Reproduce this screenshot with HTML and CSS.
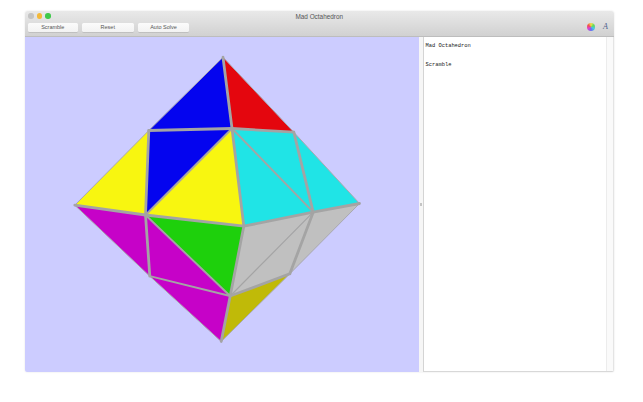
FILE: index.html
```html
<!DOCTYPE html>
<html lang="en">
<head>
<meta charset="utf-8">
<title>Mad Octahedron</title>
<link rel="stylesheet" href="styles.css">
</head>
<body>
<div class="window">
  <header class="chrome">
    <div class="titlebar">
      <div class="lights">
        <span class="light light-close"></span>
        <span class="light light-min"></span>
        <span class="light light-max"></span>
      </div>
      <div class="title">Mad Octahedron</div>
    </div>
    <div class="toolbar">
      <button class="btn btn-scramble">Scramble</button>
      <button class="btn btn-reset">Reset</button>
      <button class="btn btn-solve">Auto Solve</button>
      <div class="tools">
        <span class="wheel"></span>
        <span class="font-a">A</span>
      </div>
    </div>
  </header>
  <main class="content">
    <div class="canvas">
      <svg class="scene" viewBox="24.5 36.5 395 335.5" width="395" height="335.5" aria-label="Mad Octahedron puzzle">
        <g class="faces">
          <polygon class="blue" points="222.5,56.7 148.3,130 231.5,128"/>
          <polygon class="blue" points="148.3,130 145,214.5 231.5,128"/>
          <polygon class="red" points="222.5,56.7 231.5,128 293.3,131.7"/>
          <polygon class="yellow" points="74.3,204.7 145,214.5 148.3,130"/>
          <polygon class="yellow" points="145,214.5 243.3,225.7 231.5,128"/>
          <polygon class="cyan" points="231.5,128 312.7,211.7 243.3,225.7"/>
          <polygon class="cyan" points="231.5,128 293.3,131.7 312.7,211.7"/>
          <polygon class="cyan" points="293.3,131.7 359,203 312.7,211.7"/>
          <polygon class="magenta" points="74.3,204.7 149.3,275.7 145,214.5"/>
          <polygon class="magenta" points="145,214.5 229.7,295.5 149.3,275.7"/>
          <polygon class="magenta" points="149.3,275.7 229.7,295.5 220.7,341"/>
          <polygon class="green" points="145,214.5 243.3,225.7 229.7,295.5"/>
          <polygon class="gray" points="243.3,225.7 312.7,211.7 229.7,295.5"/>
          <polygon class="gray" points="312.7,211.7 289.3,273.3 229.7,295.5"/>
          <polygon class="gray" points="312.7,211.7 359,203 289.3,273.3"/>
          <polygon class="olive" points="229.7,295.5 289.3,273.3 220.7,341"/>
        </g>
        <g class="edges-outer">
          <polygon points="222.5,56.7 293.3,131.7 359,203 289.3,273.3 220.7,341 149.3,275.7 74.3,204.7 148.3,130"/>
        </g>
        <g class="edges-inner">
          <line x1="222.5" y1="56.7" x2="231.5" y2="128"/>
          <line x1="148.3" y1="130" x2="231.5" y2="128"/>
          <line x1="148.3" y1="130" x2="145" y2="214.5"/>
          <line x1="74.3" y1="204.7" x2="145" y2="214.5"/>
          <line x1="145" y1="214.5" x2="243.3" y2="225.7"/>
          <line x1="231.5" y1="128" x2="243.3" y2="225.7"/>
          <line x1="231.5" y1="128" x2="293.3" y2="131.7"/>
          <line x1="293.3" y1="131.7" x2="312.7" y2="211.7"/>
          <line x1="243.3" y1="225.7" x2="312.7" y2="211.7"/>
          <line x1="312.7" y1="211.7" x2="359" y2="203"/>
          <line x1="243.3" y1="225.7" x2="229.7" y2="295.5"/>
          <line x1="145" y1="214.5" x2="149.3" y2="275.7"/>
          <line x1="229.7" y1="295.5" x2="220.7" y2="341"/>
          <line x1="312.7" y1="211.7" x2="289.3" y2="273.3"/>
          <line x1="229.7" y1="295.5" x2="289.3" y2="273.3"/>
        </g>
        <g class="edges-mid">
          <line x1="145" y1="214.5" x2="231.5" y2="128"/>
          <line x1="231.5" y1="128" x2="312.7" y2="211.7"/>
          <line x1="145" y1="214.5" x2="229.7" y2="295.5"/>
          <line x1="149.3" y1="275.7" x2="229.7" y2="295.5"/>
        </g>
        <g class="edges-fine">
          <line x1="229.7" y1="295.5" x2="312.7" y2="211.7"/>
        </g>
      </svg>
    </div>
    <div class="divider"><span class="grip"></span></div>
    <div class="log">
      <div class="log-text">Mad Octahedron

Scramble</div>
      <div class="scrollbar"></div>
    </div>
  </main>
</div>
</body>
</html>
```
FILE: styles.css
```css
html, body {
  margin: 0;
  padding: 0;
  background: #ffffff;
}

body {
  width: 643px;
  height: 402px;
  overflow: hidden;
  padding: 11px 0 0 24.5px;
  box-sizing: border-box;
}

.window {
  width: 589.5px;
  height: 361px;
  display: flex;
  flex-direction: column;
  border-radius: 3px 3px 2px 2px;
  overflow: hidden;
  box-shadow: 0 0 2px rgba(0, 0, 0, 0.12);
}

.chrome {
  height: 25.5px;
  flex: none;
  background: linear-gradient(#e9e9e9, #d1d1d1);
  border-bottom: 0.5px solid #bdbdbd;
  box-sizing: border-box;
  display: flex;
  flex-direction: column;
}

.titlebar {
  height: 11px;
  position: relative;
  display: flex;
  align-items: center;
  justify-content: center;
  flex: none;
}

.lights {
  position: absolute;
  left: 3.5px;
  top: 2.2px;
  display: flex;
  gap: 3px;
}

.light {
  width: 5.5px;
  height: 5.5px;
  border-radius: 50%;
}

.light-close { background: #c4c4c4; }
.light-min { background: #f4b93a; }
.light-max { background: #3fc94a; }

.title {
  font: 6.4px/11px "Liberation Sans", Arial, sans-serif;
  color: #555555;
  padding-top: 0.5px;
}

.toolbar {
  display: flex;
  align-items: center;
  flex: 1;
  padding: 0 5px 3px 3.5px;
  gap: 4px;
}

.btn {
  height: 8.5px;
  padding: 0;
  border: 0;
  border-radius: 1.5px;
  background: linear-gradient(#fbfbfb, #f2f2f2);
  box-shadow: 0 0.5px 0.5px rgba(0, 0, 0, 0.2);
  font: 5.5px/8.5px "Liberation Sans", Arial, sans-serif;
  color: #555555;
}

.btn-scramble { width: 49.5px; }
.btn-reset { width: 52.5px; }
.btn-solve { width: 51px; }

.tools {
  margin-left: auto;
  display: flex;
  align-items: center;
  gap: 8.5px;
}

.wheel {
  width: 8px;
  height: 8px;
  border-radius: 50%;
  background: conic-gradient(#f4e04a, #5fd85f, #45c8e8, #6a6af0, #e040d0, #f05050, #f4e04a);
}

.font-a {
  font: italic 8px/8px "Liberation Serif", "Times New Roman", serif;
  color: #4a5f8a;
  width: 5px;
  margin-right: 1px;
}

.content {
  flex: 1;
  min-height: 0;
  display: flex;
  background: #ffffff;
}

.canvas {
  width: 394.5px;
  flex: none;
  overflow: hidden;
  background: #ccccff;
}

.scene {
  display: block;
}

.faces polygon { stroke: none; }
.blue { fill: #0404ef; }
.red { fill: #e4060e; }
.yellow { fill: #f8f610; }
.cyan { fill: #20e4e6; }
.magenta { fill: #c602c8; }
.green { fill: #1ed00c; }
.gray { fill: #c0c0c0; }
.olive { fill: #c0ba08; }

.edges-outer polygon {
  fill: none;
  stroke: #a8a8ae;
  stroke-width: 1;
  stroke-linejoin: round;
}

.edges-inner line {
  stroke: #a4a4a4;
  stroke-width: 2.8;
  stroke-linecap: round;
}

.edges-mid line {
  stroke: #a4a4a4;
  stroke-width: 1.9;
  stroke-linecap: round;
}

.edges-fine line {
  stroke: #a4a4a4;
  stroke-width: 1.2;
  stroke-linecap: round;
}

.divider {
  width: 3.5px;
  flex: none;
  background: #f6f6f6;
  display: flex;
  align-items: center;
  justify-content: center;
}

.grip {
  width: 2px;
  height: 3px;
  background: #c4c4c4;
}

.log {
  flex: 1;
  display: flex;
  border-left: 1px solid #d4d4d4;
  border-bottom: 1px solid #d8d8d8;
  border-right: 1px solid #e4e4e4;
  box-sizing: border-box;
  background: #ffffff;
}

.log-text {
  flex: 1;
  padding: 5.5px 2px 0 2px;
  white-space: pre-wrap;
  font: 5.4px/9.5px "Liberation Mono", "Courier New", monospace;
  color: #222222;
}

.scrollbar {
  width: 6px;
  flex: none;
  background: #fafafa;
  border-left: 0.5px solid #ececec;
}
```
